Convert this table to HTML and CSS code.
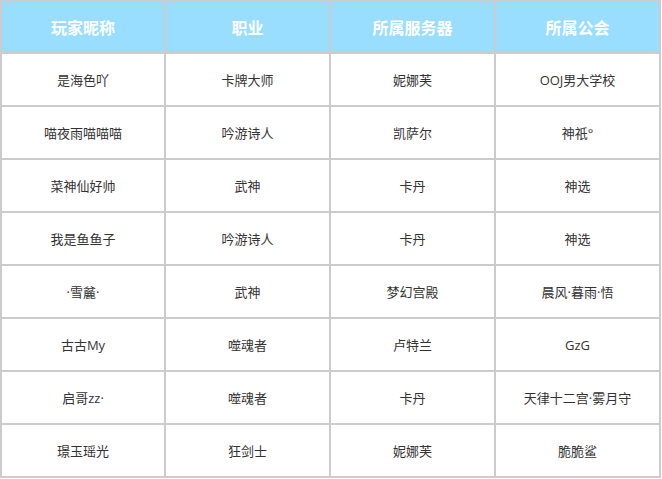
FILE: index.html
```html
<!DOCTYPE html>
<html lang="zh">
<head>
<meta charset="utf-8">
<link rel="stylesheet" href="styles.css">
</head>
<body>
<div class="grid">
  <div class="cell head">玩家昵称</div>
  <div class="cell head">职业</div>
  <div class="cell head">所属服务器</div>
  <div class="cell head">所属公会</div>

  <div class="cell">是海色吖</div>
  <div class="cell">卡牌大师</div>
  <div class="cell">妮娜芙</div>
  <div class="cell">OOJ男大学校</div>

  <div class="cell">喵夜雨喵喵喵</div>
  <div class="cell">吟游诗人</div>
  <div class="cell">凯萨尔</div>
  <div class="cell">神祇°</div>

  <div class="cell">菜神仙好帅</div>
  <div class="cell">武神</div>
  <div class="cell">卡丹</div>
  <div class="cell">神选</div>

  <div class="cell">我是鱼鱼子</div>
  <div class="cell">吟游诗人</div>
  <div class="cell">卡丹</div>
  <div class="cell">神选</div>

  <div class="cell">·雪麄·</div>
  <div class="cell">武神</div>
  <div class="cell">梦幻宫殿</div>
  <div class="cell">晨风·暮雨·悟</div>

  <div class="cell">古古My</div>
  <div class="cell">噬魂者</div>
  <div class="cell">卢特兰</div>
  <div class="cell">GzG</div>

  <div class="cell">启哥zz·</div>
  <div class="cell">噬魂者</div>
  <div class="cell">卡丹</div>
  <div class="cell">天律十二宫·雾月守</div>

  <div class="cell">璟玉瑶光</div>
  <div class="cell">狂剑士</div>
  <div class="cell">妮娜芙</div>
  <div class="cell">脆脆鲨</div>
</div>
</body>
</html>
```

FILE: styles.css
```css
html, body {
  margin: 0;
  padding: 0;
  background: #ffffff;
}
.grid {
  display: grid;
  width: 661px;
  box-sizing: border-box;
  grid-template-columns: 162px 163px 163px 163px;
  grid-template-rows: 50px repeat(8, 51px);
  gap: 2px;
  padding: 2px;
  background: #cccbce;
  font-family: "Open Sans", "Noto Sans CJK SC", sans-serif;
}
.cell {
  background: #ffffff;
  display: flex;
  align-items: center;
  justify-content: center;
  font-size: 13px;
  color: #333333;
  white-space: nowrap;
}
.head {
  background: #99ddff;
  color: #ffffff;
  font-size: 16px;
  font-weight: bold;
}
```
